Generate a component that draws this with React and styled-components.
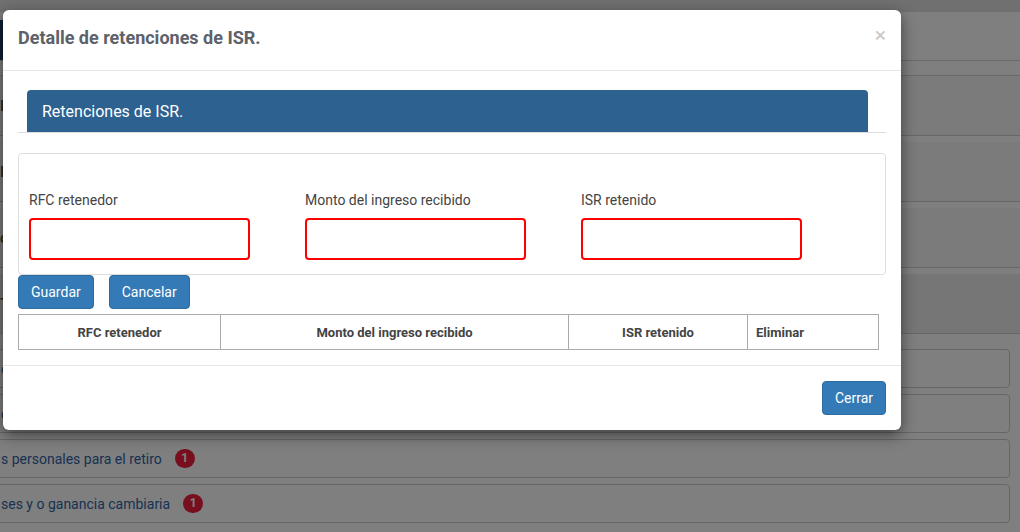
import styled, { createGlobalStyle } from "styled-components"

const GlobalStyle = createGlobalStyle`
  html, body { margin: 0; padding: 0; }
  body {
    font-family: Roboto, "Liberation Sans", Arial, sans-serif;
    background: #fff;
    width: 1020px;
    height: 532px;
    overflow: hidden;
  }
  * { box-sizing: border-box; }
`

const Page = styled.div`
  position: relative;
  width: 1020px;
  height: 532px;
  overflow: hidden;
  background: #fff;
`

const TopStrip = styled.div`
  height: 12px;
  background: #e0e0e0;
`

const Header = styled.div`
  height: 49px;
  padding-top: 8px;
  border-bottom: 1px solid #d4d4d4;
`

const Brand = styled.div`
  width: 40px;
  height: 40px;
  background: #1d3f66;
`

const Spacer = styled.div`
  height: 15px;
  border-bottom: 1px solid #d4d4d4;
`

const Section = styled.div`
  height: 60px;
  margin-bottom: 6px;
  display: flex;
  align-items: center;
  background: ${p => (p.$dark ? "#ececec" : "#f6f6f6")};
  border-bottom: 1px solid #cfcfcf;
  color: #6a4a2a;
  font-size: 15px;
  font-weight: 500;
`

const List = styled.div`
  margin: 15px 10px 0 -6px;
  display: flex;
  flex-direction: column;
  gap: 6px;
`

const Row = styled.div`
  height: 39px;
  display: flex;
  align-items: center;
  gap: 13px;
  padding-left: 6px;
  border: 1px solid #cdcdcd;
  border-radius: 4px;
  color: #2f64a4;
  font-size: 14px;
`

const Badge = styled.span`
  display: inline-block;
  width: 20px;
  height: 19px;
  line-height: 19px;
  border-radius: 10px;
  background: #f01e3c;
  color: #fff;
  font-size: 12px;
  font-weight: 700;
  text-align: center;
`

const Overlay = styled.div`
  position: absolute;
  inset: 0;
  background: rgba(0, 0, 0, 0.5);
`

const Modal = styled.div`
  position: absolute;
  left: 3px;
  top: 10px;
  width: 898px;
  background: #fff;
  border-radius: 6px;
  box-shadow: 0 5px 15px rgba(0, 0, 0, 0.5);
`

const ModalHeader = styled.div`
  display: flex;
  justify-content: space-between;
  align-items: flex-start;
  padding: 15px 15px 19px;
  border-bottom: 1px solid #e5e5e5;
`

const Title = styled.h4`
  margin: 0;
  font-size: 18px;
  line-height: 26px;
  font-weight: 700;
  color: #5d6169;
`

const Close = styled.span`
  font-size: 21px;
  line-height: 20px;
  font-weight: 400;
  color: #c8c8c8;
`

const ModalBody = styled.div`
  padding: 19px 15px 15px;
`

const Tabs = styled.div`
  height: 43px;
  padding-left: 9px;
  padding-right: 18px;
  border-bottom: 1px solid #dddddd;
`

const Tab = styled.div`
  height: 42px;
  display: flex;
  align-items: center;
  padding-left: 15px;
  background: #2c6190;
  border-radius: 4px 4px 0 0;
  color: #fff;
  font-size: 16px;
  font-weight: 400;
`

const Panel = styled.div`
  margin-top: 20px;
  padding: 36px 10px 14px;
  border: 1px solid #dddddd;
  border-radius: 4px;
  display: grid;
  grid-template-columns: repeat(3, 276px);
`

const Field = styled.div`
  display: flex;
  flex-direction: column;
`

const Label = styled.label`
  font-size: 14px;
  line-height: 20px;
  color: #444;
  margin-bottom: 8px;
`

const Input = styled.input`
  width: 221px;
  height: 42px;
  border: 2px solid #ff0000;
  border-radius: 4px;
  outline: none;
  padding: 6px 10px;
  font-size: 14px;
`

const Actions = styled.div`
  display: flex;
  gap: 15px;
`

const Button = styled.button`
  height: 34px;
  padding: 0 12px;
  border: 1px solid #2e6da4;
  border-radius: 4px;
  background: #337ab7;
  color: #fff;
  font-family: inherit;
  font-size: 14px;
  line-height: 32px;
  cursor: pointer;
`

const Table = styled.table`
  margin-top: 5px;
  width: 861px;
  border-collapse: collapse;
`

const Th = styled.th`
  height: 35px;
  border: 1px solid #aaaaaa;
  font-size: 13px;
  font-weight: 700;
  color: #444;
  text-align: ${p => p.$align || "center"};
  padding: 0 8px;
`

const ModalFooter = styled.div`
  display: flex;
  justify-content: flex-end;
  padding: 15px;
  border-top: 1px solid #e5e5e5;
`

export default function App() {
  return (
    <>
      <GlobalStyle />
      <Page>
        <TopStrip />
        <Header>
          <Brand />
        </Header>
        <Spacer />
        <Section>I</Section>
        <Section>I</Section>
        <Section>c</Section>
        <Section $dark>T</Section>
        <List>
          <Row>o</Row>
          <Row>o</Row>
          <Row>
            s personales para el retiro <Badge>1</Badge>
          </Row>
          <Row>
            ses y o ganancia cambiaria <Badge>1</Badge>
          </Row>
        </List>
        <Overlay />
        <Modal>
          <ModalHeader>
            <Title>Detalle de retenciones de ISR.</Title>
            <Close>×</Close>
          </ModalHeader>
          <ModalBody>
            <Tabs>
              <Tab>Retenciones de ISR.</Tab>
            </Tabs>
            <Panel>
              <Field>
                <Label>RFC retenedor</Label>
                <Input />
              </Field>
              <Field>
                <Label>Monto del ingreso recibido</Label>
                <Input />
              </Field>
              <Field>
                <Label>ISR retenido</Label>
                <Input />
              </Field>
            </Panel>
            <Actions>
              <Button>Guardar</Button>
              <Button>Cancelar</Button>
            </Actions>
            <Table>
              <thead>
                <tr>
                  <Th style={{ width: 202 }}>RFC retenedor</Th>
                  <Th style={{ width: 348 }}>Monto del ingreso recibido</Th>
                  <Th style={{ width: 179 }}>ISR retenido</Th>
                  <Th $align="left">Eliminar</Th>
                </tr>
              </thead>
            </Table>
          </ModalBody>
          <ModalFooter>
            <Button>Cerrar</Button>
          </ModalFooter>
        </Modal>
      </Page>
    </>
  )
}
